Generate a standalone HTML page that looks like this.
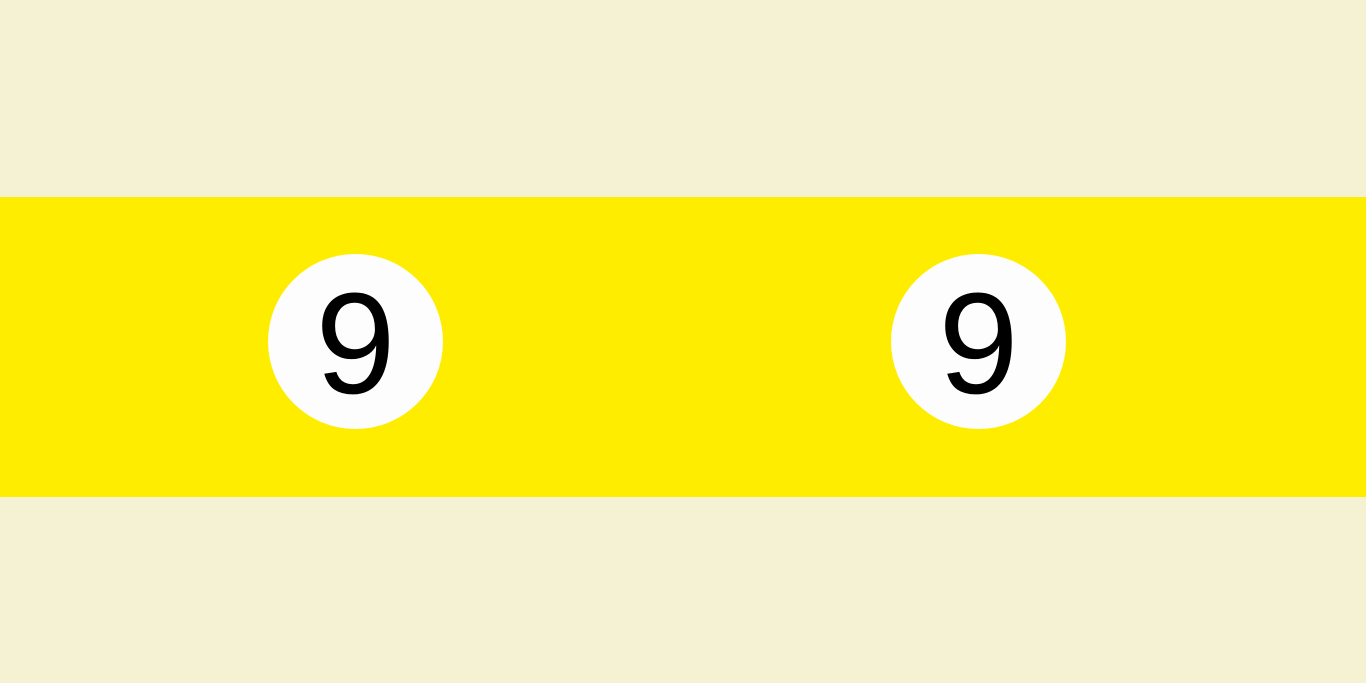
<!DOCTYPE html><html><head><style>
html,body{margin:0;padding:0;width:1366px;height:683px;background:#F5F1D3;overflow:hidden;position:relative}
.band{position:absolute;left:0;top:197px;width:1366px;height:300px;background:#FFED00}
.c{position:absolute;top:254px;width:175px;height:175px;border-radius:50%;background:#FDFDFD}
.t{position:absolute;top:272px;width:175px;text-align:center;font:144px/1 "Liberation Sans",sans-serif;color:#000}
</style></head><body>
<div class="band"></div>
<div class="c" style="left:268px"></div>
<div class="c" style="left:891px"></div>
<div class="t" style="left:268px">9</div>
<div class="t" style="left:891px">9</div>
</body></html>
